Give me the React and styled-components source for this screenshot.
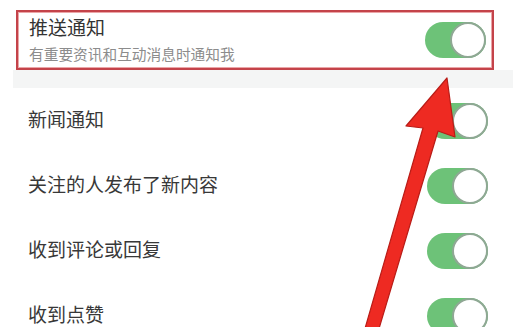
import React from "react";
import styled, { createGlobalStyle } from "styled-components";

const Global = createGlobalStyle`
  html, body { margin: 0; padding: 0; background: #ffffff; }
  body { font-family: "Noto Sans CJK SC", "Noto Sans", sans-serif; overflow: hidden; }
`;

const Page = styled.div`
  position: relative;
  width: 513px;
  height: 327px;
  overflow: hidden;
  background: #ffffff;
`;

const TopSection = styled.div`
  padding: 10px 19px 0 16px;
`;

const HighlightBox = styled.div`
  height: 60px;
  box-sizing: border-box;
  border: 2px solid #c4434a;
  box-shadow: inset 0 0 0 1px #eba5a7;
  display: flex;
  align-items: center;
  justify-content: space-between;
  padding: 0 6px 0 11px;
`;

const TextCol = styled.div`
  display: flex;
  flex-direction: column;
  gap: 6px;
  margin-top: -3px;
`;

const Title = styled.div`
  font-size: 19px;
  line-height: 24px;
  color: #333333;
`;

const Subtitle = styled.div`
  font-size: 14.7px;
  line-height: 18px;
  color: #8c8c8c;
`;

const Band = styled.div`
  height: 18px;
  margin-left: 13px;
  background: #f4f5f5;
`;

const List = styled.div`
  display: flex;
  flex-direction: column;
`;

const Row = styled.div`
  height: 65px;
  display: flex;
  align-items: center;
  justify-content: space-between;
  padding: 0 25px 0 28px;
`;

const Label = styled.div`
  font-size: 19px;
  line-height: 24px;
  color: #383838;
  margin-top: -4px;
`;

const Track = styled.div`
  width: 61px;
  height: 36px;
  border-radius: 18px;
  background: ${(p) => (p.$on ? "#6dc278" : "#dddddd")};
  display: flex;
  justify-content: ${(p) => (p.$on ? "flex-end" : "flex-start")};
  flex-shrink: 0;
`;

const Knob = styled.div`
  width: 36px;
  height: 36px;
  box-sizing: border-box;
  border-radius: 50%;
  background: #ffffff;
  border: 2px solid #8fa894;
`;

const Toggle = ({ on = true }) => (
  <Track $on={on}>
    <Knob />
  </Track>
);

const ArrowOverlay = styled.svg`
  position: absolute;
  left: 0;
  top: 0;
  pointer-events: none;
`;

const rows = ["新闻通知", "关注的人发布了新内容", "收到评论或回复", "收到点赞"];

export default function App() {
  return (
    <Page>
      <Global />
      <TopSection>
        <HighlightBox>
          <TextCol>
            <Title>推送通知</Title>
            <Subtitle>有重要资讯和互动消息时通知我</Subtitle>
          </TextCol>
          <Toggle />
        </HighlightBox>
      </TopSection>
      <Band />
      <List>
        {rows.map((r) => (
          <Row key={r}>
            <Label>{r}</Label>
            <Toggle />
          </Row>
        ))}
      </List>
      <ArrowOverlay width="513" height="327" viewBox="0 0 513 327">
        <polygon
          points="447,78 455,137 438,131 378,332 364,332 423,128 406,126"
          fill="#ee2a22"
          stroke="#b91c17"
          strokeWidth="1.2"
          strokeLinejoin="round"
        />
      </ArrowOverlay>
    </Page>
  );
}
